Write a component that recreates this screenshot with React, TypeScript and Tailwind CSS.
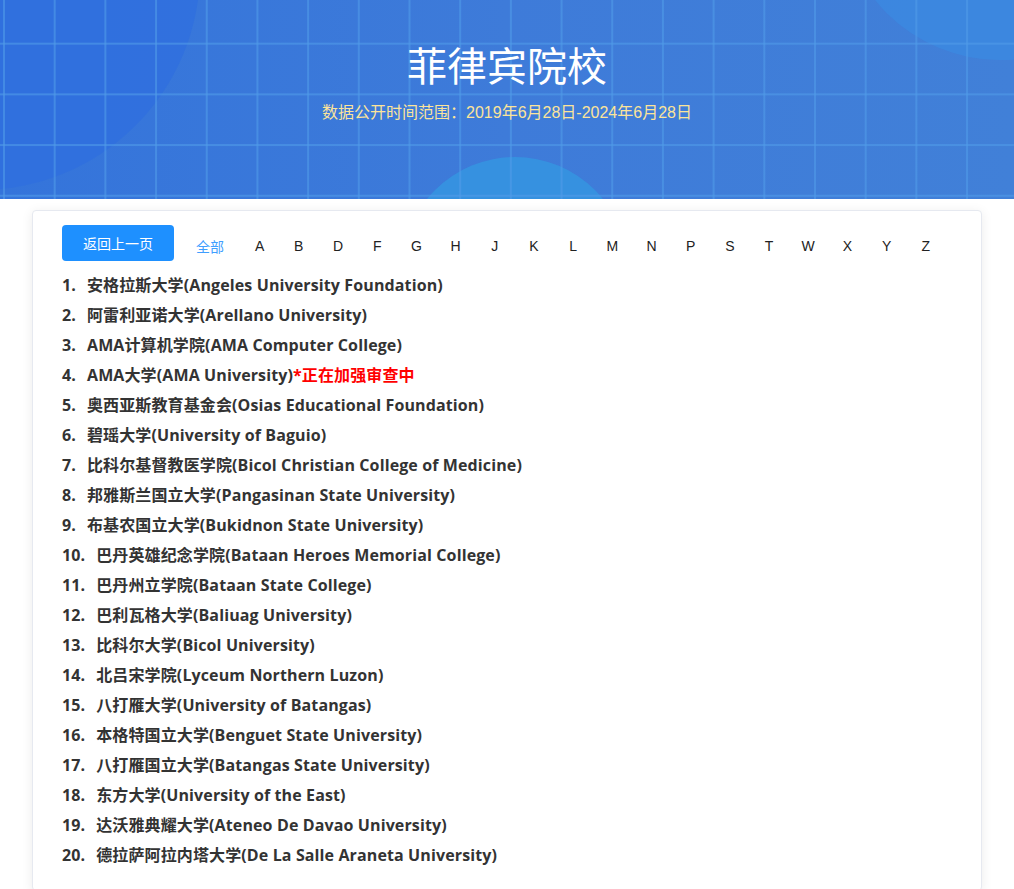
import React from 'react';

const letters = ['A', 'B', 'D', 'F', 'G', 'H', 'J', 'K', 'L', 'M', 'N', 'P', 'S', 'T', 'W', 'X', 'Y', 'Z'];

const schools: { name: string; note?: string }[] = [
  { name: '安格拉斯大学(Angeles University Foundation)' },
  { name: '阿雷利亚诺大学(Arellano University)' },
  { name: 'AMA计算机学院(AMA Computer College)' },
  { name: 'AMA大学(AMA University)', note: '*正在加强审查中' },
  { name: '奥西亚斯教育基金会(Osias Educational Foundation)' },
  { name: '碧瑶大学(University of Baguio)' },
  { name: '比科尔基督教医学院(Bicol Christian College of Medicine)' },
  { name: '邦雅斯兰国立大学(Pangasinan State University)' },
  { name: '布基农国立大学(Bukidnon State University)' },
  { name: '巴丹英雄纪念学院(Bataan Heroes Memorial College)' },
  { name: '巴丹州立学院(Bataan State College)' },
  { name: '巴利瓦格大学(Baliuag University)' },
  { name: '比科尔大学(Bicol University)' },
  { name: '北吕宋学院(Lyceum Northern Luzon)' },
  { name: '八打雁大学(University of Batangas)' },
  { name: '本格特国立大学(Benguet State University)' },
  { name: '八打雁国立大学(Batangas State University)' },
  { name: '东方大学(University of the East)' },
  { name: '达沃雅典耀大学(Ateneo De Davao University)' },
  { name: '德拉萨阿拉内塔大学(De La Salle Araneta University)' },
];

const App: React.FC = () => {
  return (
    <div className="min-h-screen bg-white font-['Open_Sans','Noto_Sans_CJK_SC',sans-serif]">
      {/* banner */}
      <header className="relative h-[199px] overflow-hidden bg-[linear-gradient(90deg,#3474db,#3e7bd9_50%,#4180d8)]">
        <div className="absolute -left-[240px] -top-[250px] w-[440px] h-[440px] rounded-full bg-[#2f6fde]/80" />
        <div className="absolute left-[840px] -top-[260px] w-[320px] h-[320px] rounded-full bg-[#3a8ae2]/70" />
        <div className="absolute left-[402px] top-[157px] w-[226px] h-[226px] rounded-full bg-[#3593e0]/90" />
        <div className="absolute inset-0 bg-[linear-gradient(rgba(80,155,232,0.6)_2px,transparent_2px),linear-gradient(90deg,rgba(80,155,232,0.6)_2px,transparent_2px)] bg-[size:50.7px_50.7px] bg-[position:3px_-8px]" />
        <div className="relative flex flex-col items-center pt-[36px]">
          <h1 className="text-[40px] leading-[56px] text-white font-['Noto_Sans_CJK_SC',sans-serif]">菲律宾院校</h1>
          <p className="mt-[9px] text-[16px] leading-[24px] text-[#fbe49a] font-['Liberation_Sans','Noto_Sans_CJK_SC',sans-serif]">
            数据公开时间范围：2019年6月28日-2024年6月28日
          </p>
        </div>
      </header>

      {/* card */}
      <main className="mt-[11px] mx-auto w-[950px] rounded-[4px] border border-[#e6e9f0] bg-white shadow-[0_2px_12px_rgba(0,0,0,0.08)] px-[29px] pt-[14px] pb-[20px]">
        <div className="flex items-center h-[36px]">
          <button className="w-[112px] h-[36px] rounded-[4px] bg-[#1e90ff] text-white text-[14px] font-['Noto_Sans_CJK_SC',sans-serif]">
            返回上一页
          </button>
          <span className="ml-[22px] mt-[6px] w-[30px] text-[14px] text-[#409eff] font-['Noto_Sans_CJK_SC',sans-serif]">全部</span>
          <div className="flex items-center ml-[14px] mt-[6px] font-['Liberation_Sans',sans-serif] text-[14px] text-[#222]">
            {letters.map((l) => (
              <span key={l} className="w-[39.2px] text-center">
                {l}
              </span>
            ))}
          </div>
        </div>

        <ul className="mt-[9px]">
          {schools.map((s, i) => (
            <li key={i} className="h-[30px] leading-[30px] text-[16px] font-bold text-[#333] whitespace-nowrap tracking-[0.12px]">
              <span className="pr-[11px]">{i + 1}.</span>
              {s.name}
              {s.note && <span className="text-[#ff0000]">{s.note}</span>}
            </li>
          ))}
        </ul>
      </main>
    </div>
  );
};

export default App;
